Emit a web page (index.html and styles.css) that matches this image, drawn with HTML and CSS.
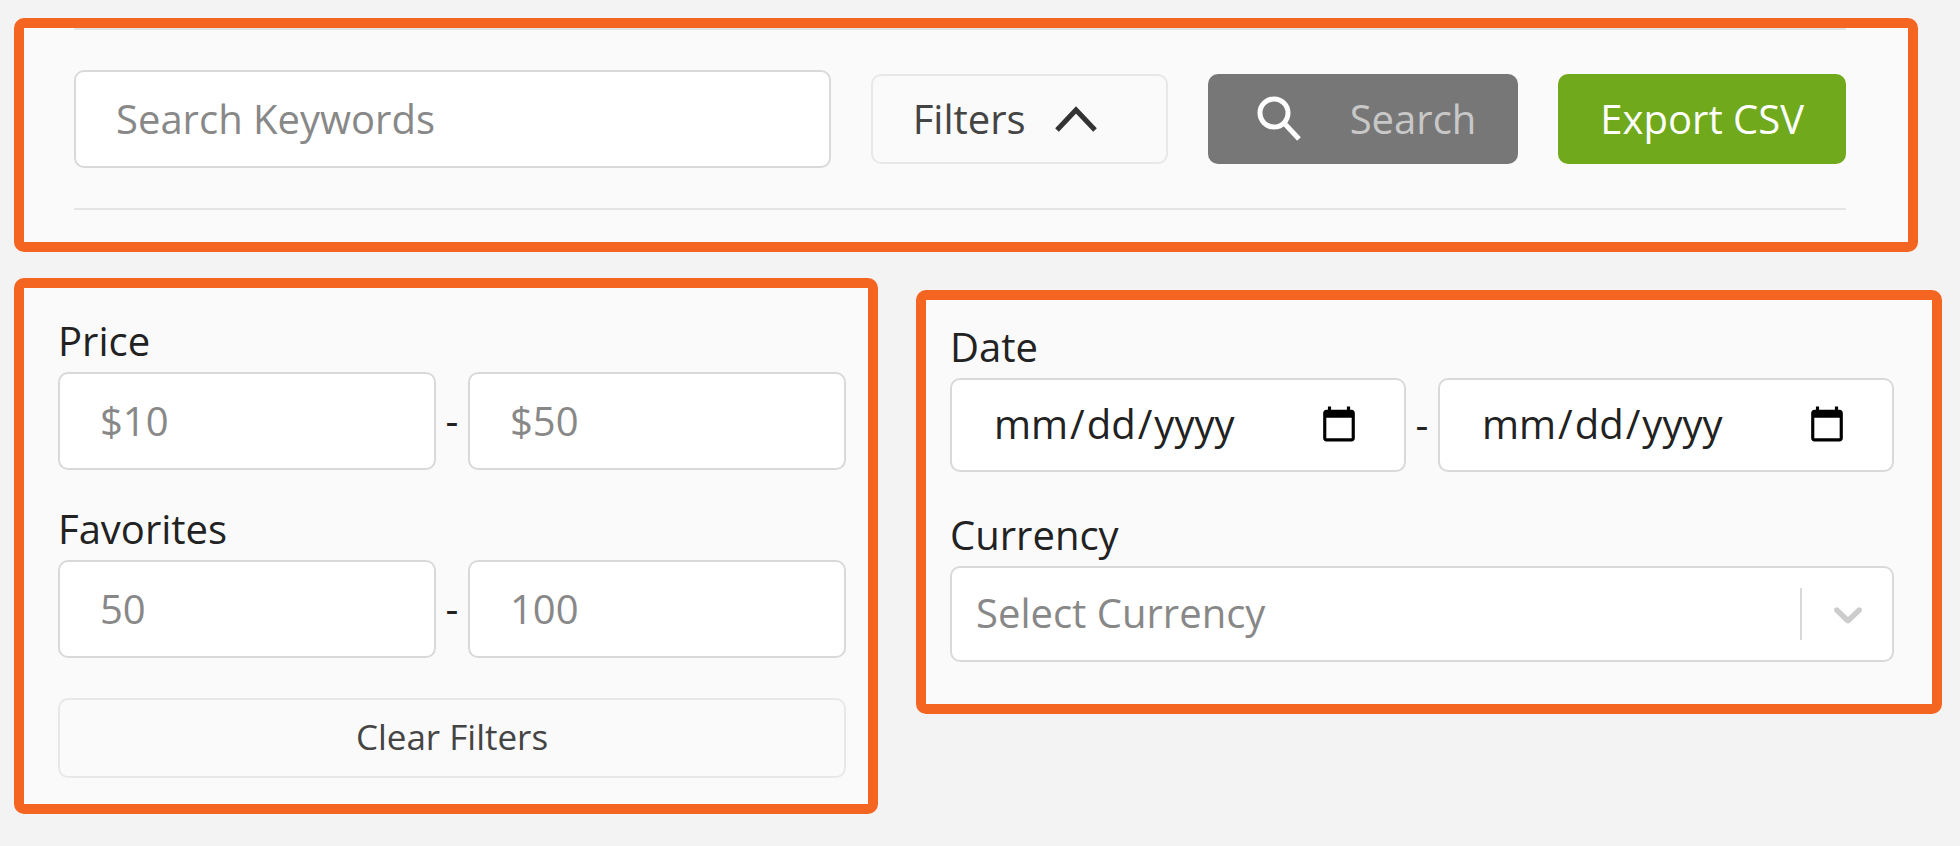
FILE: index.html
```html
<!DOCTYPE html>
<html lang="en">
<head>
<meta charset="utf-8">
<meta name="viewport" content="width=device-width, initial-scale=1">
<title>Search filters</title>
<link rel="stylesheet" href="styles.css">
</head>
<body>
<form class="page">
  <section class="panel toolbar-panel">
    <div class="toolbar">
      <input class="field search-field" type="text" placeholder="Search Keywords" aria-label="Search Keywords">
      <button class="btn btn-outline btn-filters" type="button">
        Filters
        <svg class="icon-up" viewBox="0 0 44 28" aria-hidden="true"><path d="M3 25 22 5 41 25" fill="none" stroke="#333" stroke-width="5"/></svg>
      </button>
      <button class="btn btn-search" type="button">
        <svg class="icon-search" viewBox="0 0 48 48" aria-hidden="true"><circle cx="18" cy="18" r="14" fill="none" stroke="#fff" stroke-width="5"/><path d="M28 28 43 44" fill="none" stroke="#fff" stroke-width="5"/></svg>
        <span>Search</span>
      </button>
      <button class="btn btn-export" type="button">Export CSV</button>
    </div>
  </section>

  <div class="filters">
    <section class="panel range-panel">
      <div class="group">
        <label class="label" for="price-min">Price</label>
        <div class="range">
          <input class="field" id="price-min" type="text" placeholder="$10">
          <span class="dash">-</span>
          <input class="field" type="text" placeholder="$50" aria-label="Maximum price">
        </div>
      </div>
      <div class="group">
        <label class="label" for="fav-min">Favorites</label>
        <div class="range">
          <input class="field" id="fav-min" type="text" placeholder="50">
          <span class="dash">-</span>
          <input class="field" type="text" placeholder="100" aria-label="Maximum favorites">
        </div>
      </div>
      <button class="btn btn-outline btn-clear" type="reset">Clear Filters</button>
    </section>

    <section class="panel date-panel">
      <div class="group">
        <label class="label" for="date-from">Date</label>
        <div class="range">
          <input class="field date-field" id="date-from" type="date">
          <span class="dash">-</span>
          <input class="field date-field" type="date" aria-label="End date">
        </div>
      </div>
      <div class="group">
        <label class="label" for="currency">Currency</label>
        <div class="select-wrap">
          <select class="field select" id="currency"><option>Select Currency</option></select>
          <span class="indicator">
            <svg class="icon-down" viewBox="0 0 20 20" aria-hidden="true"><path fill="#ccc" d="M4.516 7.548c0.436-0.446 1.043-0.481 1.576 0l3.908 3.747 3.908-3.747c0.533-0.481 1.141-0.446 1.574 0 0.436 0.445 0.408 1.197 0 1.615-0.406 0.418-4.695 4.502-4.695 4.502-0.217 0.223-0.502 0.335-0.787 0.335s-0.57-0.112-0.789-0.335c0 0-4.287-4.084-4.695-4.502s-0.436-1.17 0-1.615z"/></svg>
          </span>
        </div>
      </div>
    </section>
  </div>
</form>
</body>
</html>
```
FILE: styles.css
```css
* { box-sizing: border-box; }

body {
  margin: 0;
  background: #f3f3f3;
  color: #222;
  font: 40px/54px "Open Sans", "Noto Sans", sans-serif;
}

.page {
  padding: 18px 18px 32px 14px;
  display: flex;
  flex-direction: column;
  gap: 26px;
}

.panel {
  background: #fafafa;
  border: 10px solid #f56522;
  border-radius: 10px;
}

.toolbar-panel {
  margin-right: 24px;
  padding: 0 62px 32px 50px;
}

.toolbar {
  display: flex;
  align-items: center;
  gap: 40px;
  padding: 40px 0;
  border-top: 2px solid #e4e4e4;
  border-bottom: 2px solid #e4e4e4;
}

.field {
  flex: 1;
  min-width: 0;
  width: 100%;
  height: 98px;
  padding: 0 40px 2px;
  border: 2px solid #d9d9d9;
  border-radius: 10px;
  background: #fff;
  color: #222;
  font: inherit;
}

.field::placeholder { color: #888; opacity: 1; }

.btn {
  display: flex;
  align-items: center;
  height: 90px;
  padding: 0 40px;
  border: 2px solid transparent;
  border-radius: 10px;
  font: inherit;
  white-space: nowrap;
}

.btn-outline {
  background: #fafafa;
  border-color: #e8e8e8;
  color: #444;
}

.btn-filters { gap: 28px; padding-right: 68px; }
.btn-search { gap: 46px; padding-left: 46px; background: #777; color: #c8c8c8; }
.btn-export { background: #70a91b; color: #fff; }

.btn-clear {
  width: 100%;
  height: 80px;
  padding-bottom: 2px;
  justify-content: center;
  font-size: 35px;
}

.icon-up { width: 44px; height: 28px; }
.icon-search { width: 48px; height: 48px; }

.filters {
  display: grid;
  grid-template-columns: 16fr 19fr;
  align-items: start;
  gap: 38px;
}

.range-panel { padding: 26px 22px 26px 34px; }
.date-panel { margin-top: 12px; padding: 20px 38px 42px 24px; }

.label { display: block; height: 58px; }

.range { display: flex; align-items: center; }
.range-panel .group { margin-bottom: 32px; }
.range-panel .group + .group { margin-bottom: 40px; }
.date-panel .group + .group { margin-top: 36px; }

.dash { width: 32px; padding-bottom: 2px; text-align: center; }

.date-field { height: 94px; }
.date-field::-webkit-datetime-edit-month-field,
.date-field::-webkit-datetime-edit-day-field,
.date-field::-webkit-datetime-edit-year-field { padding: 0 2px; }
.date-field::-webkit-calendar-picker-indicator { margin-top: 2px; margin-right: 3px; }

.select-wrap { position: relative; }
.select {
  display: block;
  height: 96px;
  padding: 0 100px 2px 24px;
  appearance: none;
  color: #888;
}

.indicator {
  position: absolute;
  top: 22px;
  bottom: 22px;
  right: 0;
  display: flex;
  align-items: center;
  padding: 0 22px;
  border-left: 2px solid #d9d9d9;
  pointer-events: none;
}
.icon-down { width: 48px; height: 48px; }
```
